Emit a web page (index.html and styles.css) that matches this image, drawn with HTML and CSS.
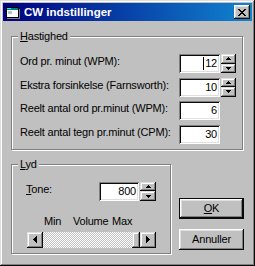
FILE: index.html
```html
<!DOCTYPE html>
<html lang="da">
<head>
<meta charset="utf-8">
<title>CW indstillinger</title>
<link rel="stylesheet" href="styles.css">
</head>
<body>
<div class="window">
  <div class="titlebar">
    <svg class="app-icon" width="16" height="16" viewBox="0 0 16 16" shape-rendering="crispEdges">
      <rect x="1" y="3" width="13" height="11" fill="#000"/>
      <rect x="2" y="6" width="11" height="7" fill="#fff"/>
      <rect x="2" y="4" width="11" height="2" fill="#008080"/>
      <rect x="2" y="4" width="4" height="1" fill="#00ffff"/>
      <rect x="3" y="7" width="4" height="3" fill="#c0c0c0"/>
      <rect x="14" y="5" width="1" height="10" fill="#808080"/>
      <rect x="2" y="14" width="13" height="1" fill="#808080"/>
    </svg>
    <span class="title">CW indstillinger</span>
    <span class="close" role="button" aria-label="Luk">
      <svg width="8" height="7" viewBox="0 0 8 7" shape-rendering="crispEdges">
        <path d="M0 0h2v1h1v1h2V1h1V0h2v1H7v1H6v1H5v1h1v1h1v1h1v1H6V6H5V5H3v1H2v1H0V6h1V5h1V4h1V3H2V2H1V1H0z" fill="#000"/>
      </svg>
    </span>
  </div>

  <div class="content">
    <div class="group speed">
      <span class="group-title"><u>H</u>astighed</span>
      <div class="rows">
        <div class="row">
          <span class="label">Ord pr. minut (WPM):</span>
          <div class="field"><span class="caret"></span>12</div>
          <div class="spin">
            <span class="spin-btn"><svg width="5" height="3" viewBox="0 0 5 3" shape-rendering="crispEdges"><path d="M2 0h1v1h1v1h1v1H0V2h1V1h1z"/></svg></span>
            <span class="spin-btn"><svg width="5" height="3" viewBox="0 0 5 3" shape-rendering="crispEdges"><path d="M0 0h5v1H4v1H3v1H2V2H1V1H0z"/></svg></span>
          </div>
        </div>
        <div class="row">
          <span class="label">Ekstra forsinkelse (Farnsworth):</span>
          <div class="field">10</div>
          <div class="spin">
            <span class="spin-btn"><svg width="5" height="3" viewBox="0 0 5 3" shape-rendering="crispEdges"><path d="M2 0h1v1h1v1h1v1H0V2h1V1h1z"/></svg></span>
            <span class="spin-btn"><svg width="5" height="3" viewBox="0 0 5 3" shape-rendering="crispEdges"><path d="M0 0h5v1H4v1H3v1H2V2H1V1H0z"/></svg></span>
          </div>
        </div>
        <div class="row">
          <span class="label">Reelt antal ord pr.minut (WPM):</span>
          <div class="field no-spin">6</div>
        </div>
        <div class="row">
          <span class="label">Reelt antal tegn pr.minut (CPM):</span>
          <div class="field no-spin">30</div>
        </div>
      </div>
    </div>

    <div class="lower">
      <div class="group sound">
        <span class="group-title"><u>L</u>yd</span>
        <div class="row tone-row">
          <span class="label"><u>T</u>one:</span>
          <div class="field tone-field">800</div>
          <div class="spin tone-spin">
            <span class="spin-btn"><svg width="5" height="3" viewBox="0 0 5 3" shape-rendering="crispEdges"><path d="M2 0h1v1h1v1h1v1H0V2h1V1h1z"/></svg></span>
            <span class="spin-btn"><svg width="5" height="3" viewBox="0 0 5 3" shape-rendering="crispEdges"><path d="M0 0h5v1H4v1H3v1H2V2H1V1H0z"/></svg></span>
          </div>
        </div>
        <div class="scale">
          <span class="s-min">Min</span>
          <span class="s-vol">Volume</span>
          <span class="s-max">Max</span>
        </div>
        <div class="scrollbar">
          <span class="sb-btn"><svg width="4" height="7" viewBox="0 0 4 7" shape-rendering="crispEdges"><path d="M3 0h1v7H3V6H2V5H1V4H0V3h1V2h1V1h1z"/></svg></span>
          <span class="track"><span class="thumb"></span></span>
          <span class="sb-btn"><svg width="4" height="7" viewBox="0 0 4 7" shape-rendering="crispEdges"><path d="M0 0h1v1h1v1h1v1h1v1H3v1H2v1H1v1H0z"/></svg></span>
        </div>
      </div>

      <div class="buttons">
        <button class="btn default" type="button"><u>O</u>K</button>
        <button class="btn" type="button">Annuller</button>
      </div>
    </div>
  </div>
</div>
</body>
</html>
```

FILE: styles.css
```css
* {
  box-sizing: border-box;
}

html, body {
  margin: 0;
  padding: 0;
  background: #c0c0c0;
}

body {
  font-family: "Liberation Sans", Arial, sans-serif;
  font-size: 11px;
  letter-spacing: -0.2px;
  color: #000;
}

.window {
  width: 255px;
  height: 266px;
  padding: 3px;
  background: #c0c0c0;
  box-shadow: inset -1px -1px #0a0a0a, inset 1px 1px #dfdfdf,
              inset -2px -2px #808080, inset 2px 2px #fff;
  display: flex;
  flex-direction: column;
}

/* Title bar */
.titlebar {
  height: 18px;
  display: flex;
  align-items: center;
  padding: 0 2px;
  background: linear-gradient(90deg, #000080, #1084d0);
  color: #fff;
}

.app-icon {
  flex: none;
  margin-right: 3px;
}

.title {
  flex: 1;
  font-weight: bold;
  font-size: 11.5px;
  letter-spacing: 0;
  line-height: 13px;
}

.close {
  width: 16px;
  height: 14px;
  display: flex;
  align-items: center;
  justify-content: center;
  background: #c0c0c0;
  box-shadow: inset -1px -1px #0a0a0a, inset 1px 1px #fff,
              inset -2px -2px #808080, inset 2px 2px #dfdfdf;
}

/* Content */
.content {
  padding: 15px 9px 0 8px;
  display: flex;
  flex-direction: column;
}

.group {
  border: 1px solid #808080;
  box-shadow: 1px 1px 0 #fff, inset 1px 1px 0 #fff;
  display: flex;
  flex-direction: column;
}

.group-title {
  align-self: flex-start;
  line-height: 13px;
  padding: 0 2px;
  margin-top: -7px;
  background: #c0c0c0;
}

.speed {
  padding: 0 6px 5px 8px;
}

.speed .group-title {
  margin-left: -2px;
}

.rows {
  margin-top: 11px;
  display: flex;
  flex-direction: column;
  gap: 4.67px;
}

.row {
  height: 19px;
  display: flex;
  align-items: center;
}

.label {
  flex: 1;
  line-height: 13px;
  margin-top: -4px;
  white-space: nowrap;
}

.field {
  width: 41px;
  height: 19px;
  flex: none;
  background: #fff;
  box-shadow: inset 1px 1px #808080, inset -1px -1px #fff,
              inset 2px 2px #0a0a0a, inset -2px -2px #dfdfdf;
  display: flex;
  align-items: center;
  justify-content: flex-end;
  padding-right: 3px;
  line-height: 13px;
}

.field.no-spin {
  margin-right: 16px;
}

.caret {
  width: 1px;
  height: 13px;
  background: #000;
  margin-right: 1px;
}

.spin {
  width: 15px;
  height: 19px;
  margin-left: 1px;
  flex: none;
  display: flex;
  flex-direction: column;
}

.spin-btn {
  flex: 1;
  display: flex;
  align-items: center;
  justify-content: center;
  background: #c0c0c0;
  box-shadow: inset -1px -1px #0a0a0a, inset 1px 1px #dfdfdf,
              inset -2px -2px #808080, inset 2px 2px #fff;
}

.spin-btn svg,
.sb-btn svg {
  fill: #000;
}

/* Lower section */
.lower {
  margin-top: 14px;
  display: flex;
  align-items: flex-start;
}

.sound {
  width: 160px;
  flex: none;
  padding: 0 14px 5px 14px;
}

.sound .group-title {
  margin-left: -8px;
}

.tone-row {
  margin-top: 11px;
}

.tone-field {
  width: 40px;
}

.tone-spin {
  width: 16px;
}

.scale {
  margin-top: 14px;
  line-height: 13px;
  display: flex;
  white-space: nowrap;
}

.s-min {
  margin-left: 18px;
  width: 29px;
}

.s-vol {
  width: 39px;
}

.scrollbar {
  margin-top: 4px;
  margin-left: 1px;
  height: 16px;
  display: flex;
}

.sb-btn {
  width: 16px;
  height: 16px;
  flex: none;
  display: flex;
  align-items: center;
  justify-content: center;
  background: #c0c0c0;
  box-shadow: inset -1px -1px #0a0a0a, inset 1px 1px #dfdfdf,
              inset -2px -2px #808080, inset 2px 2px #fff;
}

.track {
  flex: 1;
  display: flex;
  justify-content: flex-end;
  background-color: #c0c0c0;
  background-image: conic-gradient(#fff 25%, #c0c0c0 0 50%, #fff 0 75%, #c0c0c0 0);
  background-size: 2px 2px;
}

.thumb {
  width: 8px;
  height: 16px;
  background: #c0c0c0;
  box-shadow: inset -1px -1px #0a0a0a, inset 1px 1px #dfdfdf,
              inset -2px -2px #808080, inset 2px 2px #fff;
}

.buttons {
  width: 65px;
  flex: none;
  margin-left: 8px;
  padding-top: 34px;
  display: flex;
  flex-direction: column;
  gap: 10px;
}

.btn {
  height: 21px;
  margin: 0;
  padding: 0;
  border: none;
  background: #c0c0c0;
  font: inherit;
  letter-spacing: inherit;
  color: #000;
  line-height: 13px;
  box-shadow: inset -1px -1px #0a0a0a, inset 1px 1px #fff,
              inset -2px -2px #808080, inset 2px 2px #dfdfdf;
}

.btn.default {
  box-shadow: inset 0 0 0 1px #0a0a0a, inset -2px -2px #0a0a0a,
              inset 2px 2px #fff, inset -3px -3px #808080,
              inset 3px 3px #dfdfdf;
}
```
